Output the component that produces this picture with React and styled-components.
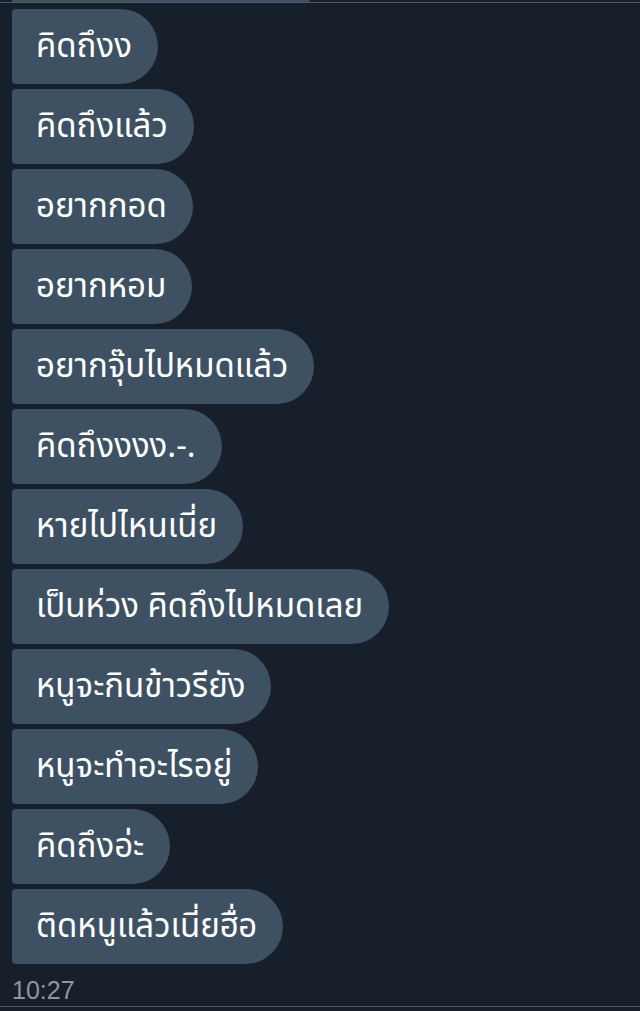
import styled, { createGlobalStyle } from "styled-components"

const GlobalStyle = createGlobalStyle`
  html, body {
    margin: 0;
    padding: 0;
    background: #17202a;
  }
`

const Page = styled.div`
  width: 640px;
  height: 1011px;
  overflow: hidden;
  background: #17202a;
  font-family: "Noto Sans Thai", Thonburi, "Noto Sans", "DejaVu Sans", sans-serif;
  display: flex;
  flex-direction: column;
`

const PrevTail = styled.div`
  width: 298px;
  height: 2px;
  margin-left: 12px;
  background: #3d5163;
  border-radius: 0 0 6px 0;
`

const Rule = styled.div`
  height: 1px;
  background: #4f5b67;
`

const MessageList = styled.div`
  display: flex;
  flex-direction: column;
  align-items: flex-start;
  gap: 5px;
  padding: 6px 0 0 12px;
`

const Bubble = styled.div`
  box-sizing: border-box;
  height: 75px;
  display: flex;
  align-items: center;
  padding: 1px 26px 0 24px;
  background: #3d5163;
  color: #ffffff;
  font-size: 33px;
  white-space: nowrap;
  border-radius: 4px 38px 38px 4px;
`

const Time = styled.div`
  margin: 15px 0 4px 12px;
  height: 23px;
  line-height: 23px;
  font-family: "Liberation Sans", Arial, sans-serif;
  font-size: 25px;
  color: #8b97a4;
`

const messages = [
  "คิดถึงง",
  "คิดถึงแล้ว",
  "อยากกอด",
  "อยากหอม",
  "อยากจุ๊บไปหมดแล้ว",
  "คิดถึงงงง.-.",
  "หายไปไหนเนี่ย",
  "เป็นห่วง คิดถึงไปหมดเลย",
  "หนูจะกินข้าวรียัง",
  "หนูจะทำอะไรอยู่",
  "คิดถึงอ่ะ",
  "ติดหนูแล้วเนี่ยฮื่อ",
]

export default function App() {
  return (
    <>
      <GlobalStyle />
      <Page>
        <PrevTail />
        <Rule />
        <MessageList>
          {messages.map((text, i) => (
            <Bubble key={i}>{text}</Bubble>
          ))}
        </MessageList>
        <Time>10:27</Time>
        <Rule />
      </Page>
    </>
  )
}
